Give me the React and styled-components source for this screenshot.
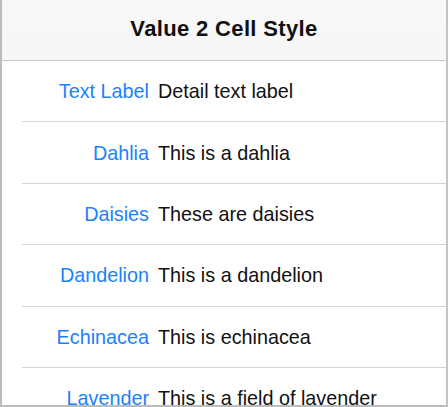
import React from "react";
import styled, { createGlobalStyle } from "styled-components";

const Global = createGlobalStyle`
  html, body { margin: 0; padding: 0; background: #ffffff; }
  body { font-family: "Liberation Sans", Arial, sans-serif; }
`;

const Frame = styled.div`
  box-sizing: border-box;
  width: 448px;
  height: 407px;
  overflow: hidden;
  background: #ffffff;
  border-left: 2px solid #bcbcbc;
  border-right: 2px solid #c4c4c4;
  border-bottom: 2px solid #bcbcbc;
  display: flex;
  flex-direction: column;
`;

const NavBar = styled.header`
  box-sizing: border-box;
  flex: 0 0 auto;
  height: 61px;
  padding-bottom: 2px;
  background: linear-gradient(#f8f8f8, #f6f6f6);
  border-bottom: 1px solid #c6c6c6;
  display: flex;
  align-items: center;
  justify-content: center;
`;

const Title = styled.h1`
  margin: 0;
  font-size: 22px;
  font-weight: 700;
  color: #111111;
  letter-spacing: 0.35px;
`;

const List = styled.ul`
  list-style: none;
  margin: 0;
  padding: 0;
  flex: 1 1 auto;
`;

const Row = styled.li`
  box-sizing: border-box;
  height: 61.4px;
  margin-left: 20px;
  padding-top: 1px;
  border-bottom: 1px solid #d4d4d4;
  display: grid;
  grid-template-columns: 127px auto;
  column-gap: 9px;
  align-items: center;
  font-size: 19.8px;
`;

const Label = styled.span`
  text-align: right;
  color: #1a82fb;
  white-space: nowrap;
`;

const Detail = styled.span`
  color: #111111;
  white-space: nowrap;
`;

const rows = [
  ["Text Label", "Detail text label"],
  ["Dahlia", "This is a dahlia"],
  ["Daisies", "These are daisies"],
  ["Dandelion", "This is a dandelion"],
  ["Echinacea", "This is echinacea"],
  ["Lavender", "This is a field of lavender"],
];

export default function App() {
  return (
    <>
      <Global />
      <Frame>
        <NavBar>
          <Title>Value 2 Cell Style</Title>
        </NavBar>
        <List>
          {rows.map(([label, detail]) => (
            <Row key={label}>
              <Label>{label}</Label>
              <Detail>{detail}</Detail>
            </Row>
          ))}
        </List>
      </Frame>
    </>
  );
}
